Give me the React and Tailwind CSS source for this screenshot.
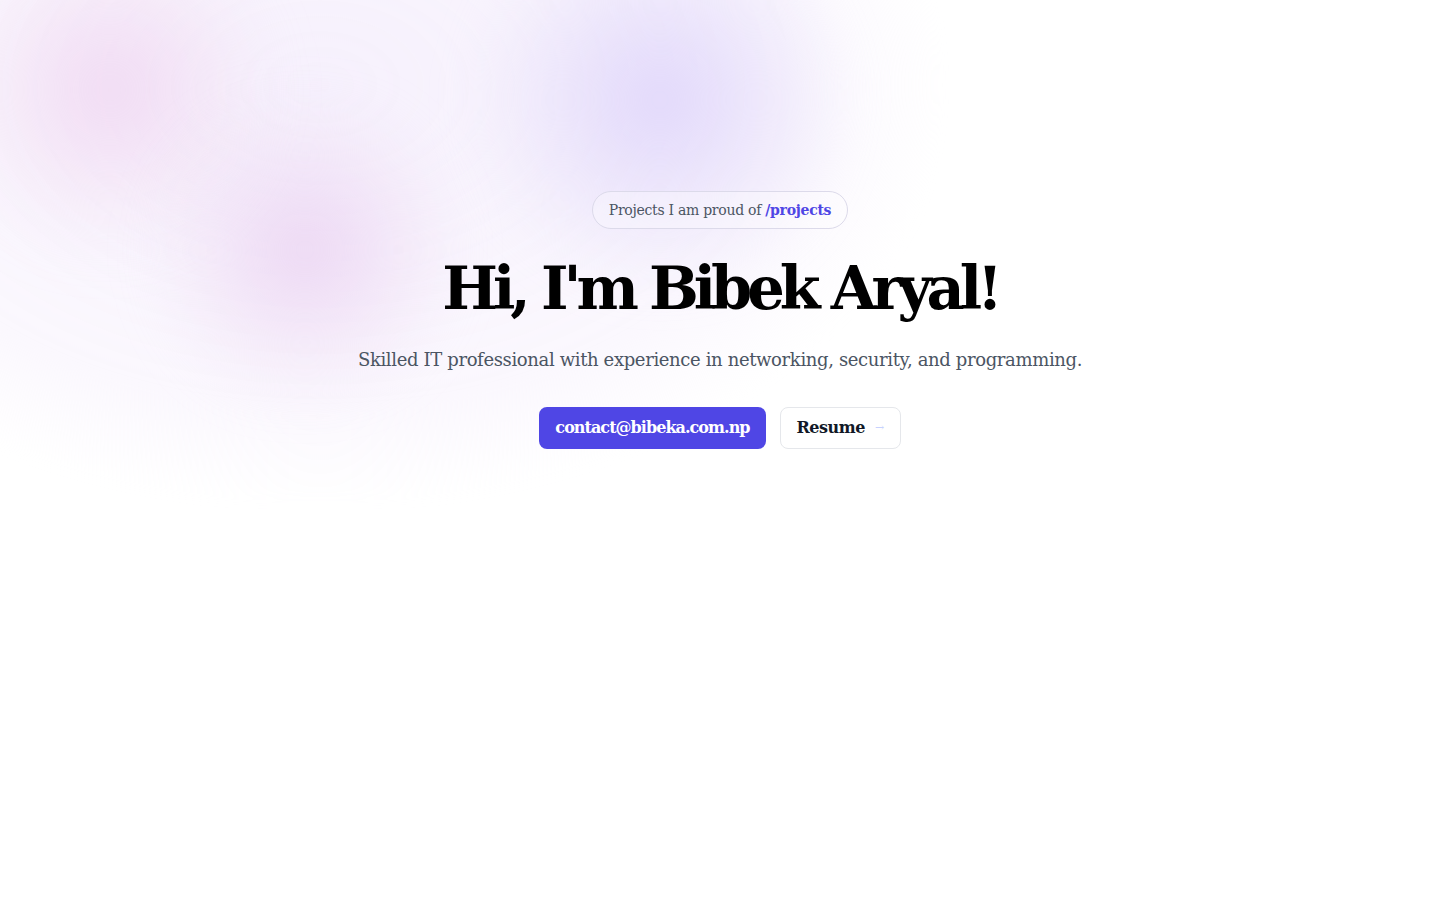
import React from "react";

export default function App() {
  return (
    <div className="relative min-h-[900px] w-full overflow-hidden bg-white" style={{ fontFamily: '"DejaVu Serif", "Liberation Serif", serif' }}>
      <div aria-hidden className="pointer-events-none absolute inset-0">
        <div className="absolute left-[-300px] top-[-330px] h-[830px] w-[1240px] rounded-full bg-[radial-gradient(ellipse_at_center,rgba(237,226,250,0.5)_0%,rgba(245,238,252,0.42)_55%,rgba(255,255,255,0)_72%)] blur-[6px]" />
        <div className="absolute left-[-70px] top-[-70px] h-[320px] w-[360px] rounded-full bg-[radial-gradient(circle_at_center,rgba(236,200,236,0.6)_0%,rgba(240,215,240,0.28)_45%,rgba(255,255,255,0)_70%)] blur-[28px]" />
        <div className="absolute left-[130px] top-[100px] h-[300px] w-[350px] rounded-full bg-[radial-gradient(circle_at_center,rgba(230,200,238,0.65)_0%,rgba(236,214,242,0.3)_45%,rgba(255,255,255,0)_70%)] blur-[24px]" />
        <div className="absolute left-[460px] top-[-90px] h-[380px] w-[400px] rounded-full bg-[radial-gradient(circle_at_center,rgba(222,212,250,0.9)_0%,rgba(230,222,250,0.45)_45%,rgba(255,255,255,0)_70%)] blur-[24px]" />
      </div>

      <div className="relative flex flex-col items-center pt-[191px]">
        <a className="flex h-[38px] items-center rounded-full border border-[#dcdaea] bg-white/30 px-4 text-[14px] tracking-[-0.02em] text-[#4b5563]">
          Projects I am proud of&nbsp;<span className="font-bold text-[#4f46e5]">/projects</span>
        </a>
        <h1 className="mt-[22px] text-[59px] font-bold leading-[76px] tracking-[-0.087em] text-black">Hi, I'm Bibek Aryal!</h1>
        <p className="mt-[19px] text-[18px] leading-[28px] tracking-[-0.02em] text-[#4b5563]">Skilled IT professional with experience in networking, security, and programming.</p>
        <div className="mt-[33px] flex items-center gap-[14px]">
          <a className="flex h-[42px] items-center rounded-lg bg-[#4f46e5] px-[16px] text-[16px] font-bold tracking-[-0.06em] text-white">contact@bibeka.com.np</a>
          <a className="flex h-[42px] items-center gap-[10px] rounded-lg border border-[#e5e7eb] bg-white px-4 text-[16px] font-bold tracking-[-0.03em] text-[#111827]">
            Resume <span className="text-[11px] font-normal text-[#c7d2fe]">→</span>
          </a>
        </div>
      </div>
    </div>
  );
}
